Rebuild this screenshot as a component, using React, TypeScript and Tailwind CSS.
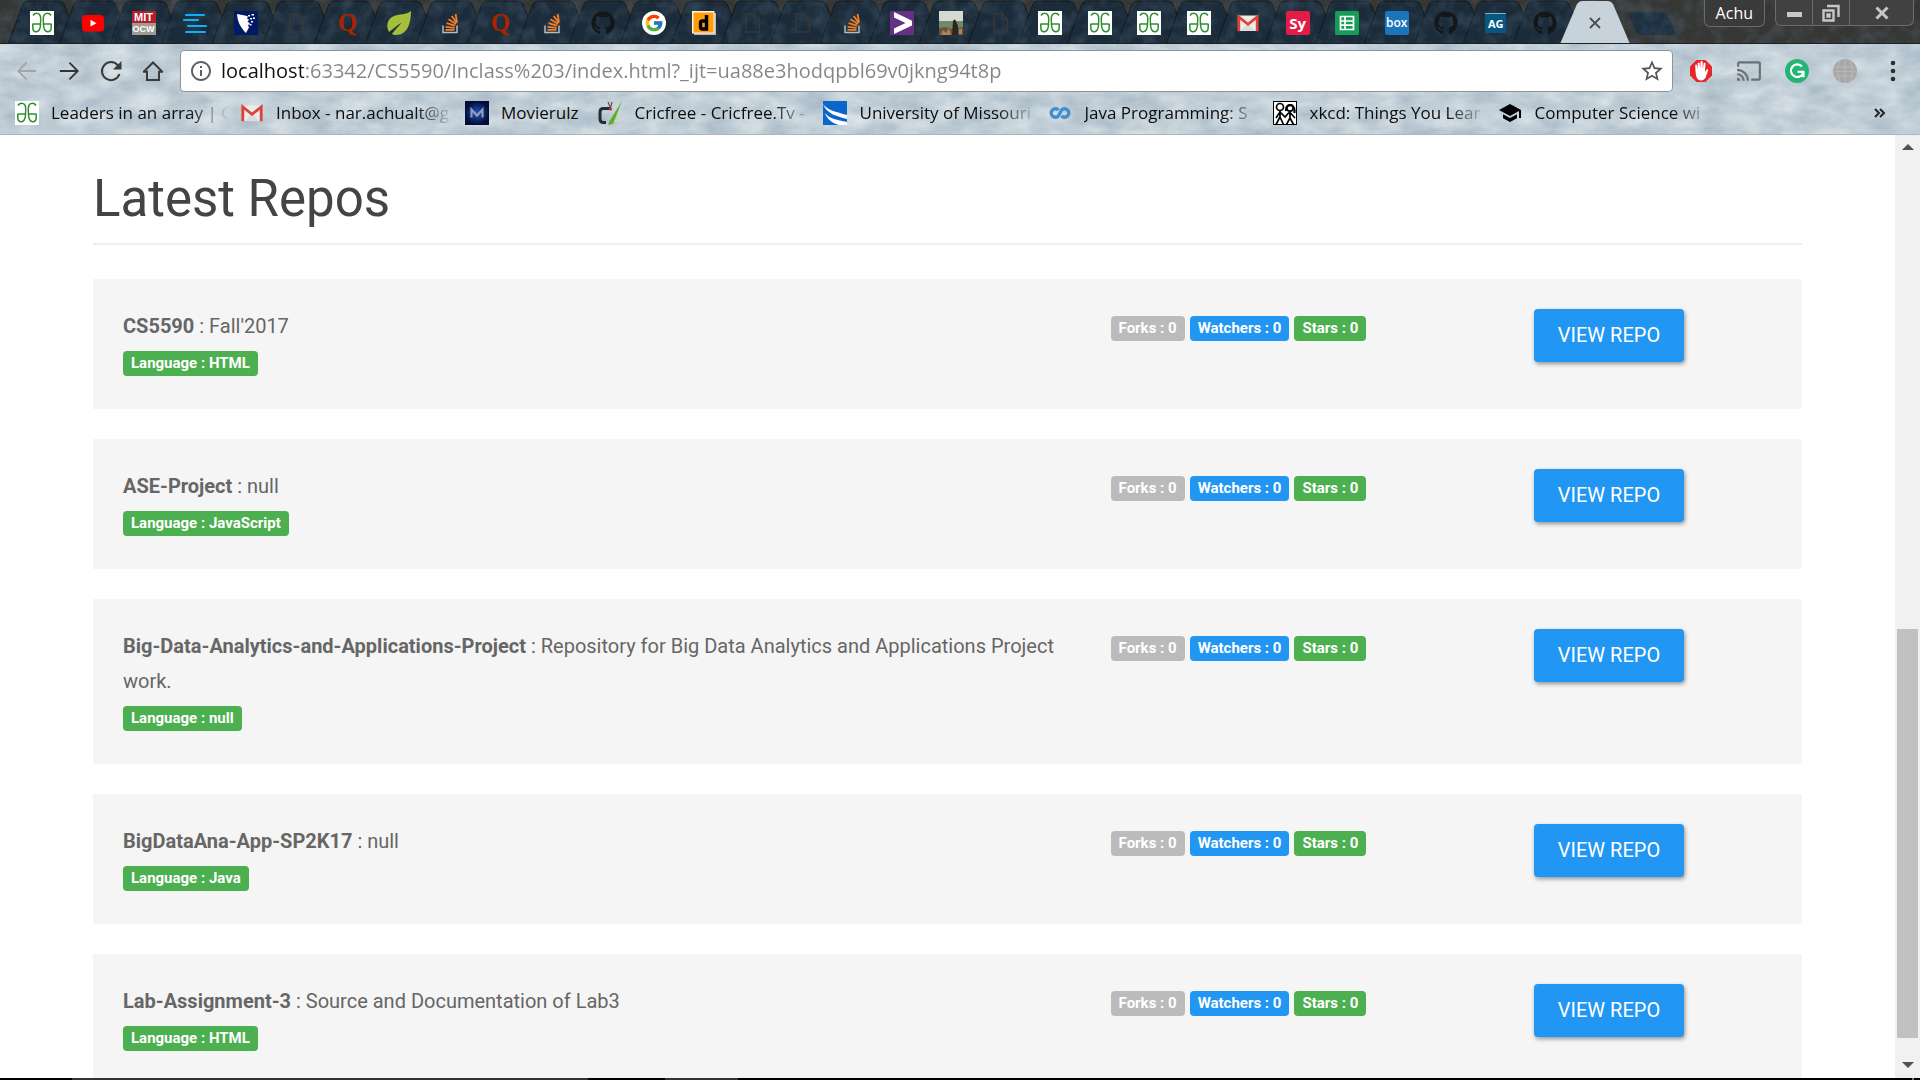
import React from "react";
import { FaGithub } from "react-icons/fa";
import { FcGoogle } from "react-icons/fc";
import { MdCast, MdInfoOutline, MdSchool, MdStarBorder } from "react-icons/md";

type IconProps = { className?: string };

/* ---------- favicons ---------- */

const Geeks = () => (
  <svg viewBox="0 0 24 24" className="size-6">
    <rect width="24" height="24" fill="#fff" />
    <g fill="none" stroke="#2f8d2f" strokeWidth="1.5">
      <path d="M3 4.500C5 1.500 9.500 1.500 10.500 5.500C11 8 10.800 10 10.500 13H2.500" />
      <path d="M10.500 13C10.500 23 2.500 22.500 2.800 16.500V13M21 4.500C19 1.500 14.500 1.500 13.500 5.500C13 8 13.200 10 13.500 13H21.500" />
      <path d="M13.500 13C13.500 23 21.500 22.500 21.200 16.500V13" />
    </g>
  </svg>
);

const YouTube = () => (
  <svg viewBox="0 0 24 24" className="size-6">
    <rect x="1" y="4" width="22" height="16.500" rx="3.500" fill="#f00" />
    <path d="M9.500 8.800v6.800l6-3.400z" fill="#fff" />
  </svg>
);

const MitOcw = () => (
  <span className="flex size-6 flex-col font-['Liberation_Sans'] text-[11px] leading-3 font-bold text-white">
    <span className="h-3 bg-[#b3202c] text-center">MIT</span>
    <span className="flex h-3 justify-center bg-[#a09c92] text-[9px]">OCW</span>
  </span>
);

const Lines = () => (
  <svg viewBox="0 0 24 24" className="size-6" stroke="#0ab1fb" strokeWidth="2.200" strokeLinecap="round">
    <path d="M3 4h18M1 9h14M5 15h18M3 21h19" />
  </svg>
);

const Shield = () => (
  <svg viewBox="0 0 24 24" className="size-6">
    <rect width="24" height="24" fill="#001a66" />
    <path d="M3 3l8 1.500 3 1-1 2 2 1-1.500 2.500 2.500 1-2 2.500 1 2-2 3.500-1 2C8 18 3.500 12 3 3z" fill="#fff" />
    <path d="M14 4h2v1.500h-2zM17.500 3H20v1.500h-2.500zM16 7h2v1.500h-2zM19 6.500h2V8h-2zM17 10h2v1.500h-2zM15.500 13h2v1.500h-2z" fill="#fff" />
  </svg>
);

const BlankPage = () => (
  <svg viewBox="0 0 24 24" className="size-6" fill="none" stroke="#36393c" strokeWidth="1.500">
    <path d="M5 3h8l5.500 5.500V21H5zM13 3v5.500h5.500" />
  </svg>
);

const Quora = () => (
  <span className="flex size-6 items-center justify-center font-['Liberation_Serif'] text-[25px] leading-6 font-bold text-[#a82400]">
    Q
  </span>
);

const Leaf = () => (
  <svg viewBox="0 0 24 24" className="size-6">
    <path d="M24 0C24 13 20 24 9 24c-1.500 0-3-.4-4-1.200C8 19 12 15 14.500 11.500 10 14.500 5 18.500 2 21-1 16 0 8.500 6 5.500 12 2.500 19 4 24 0z" fill="#a4bf39" />
  </svg>
);

const StackOverflow = () => (
  <svg viewBox="0 0 24 24" className="size-6">
    <path d="M5 14.500v7h14v-7" fill="none" stroke="#b4bcc0" strokeWidth="1.500" />
    <g stroke="#f48024" strokeWidth="1.800">
      <path d="M7.500 18.800h9M7.600 15.800l9 1M8.500 12.200l8.600 2.500M10.500 8.300l7.500 4.700M13.700 5l5.200 7M17.600 3l1.400 8.300" />
    </g>
  </svg>
);

const GitHub = () => <FaGithub className="size-6 text-[#14171a]" />;

const Google = () => (
  <span className="flex size-6 items-center justify-center rounded-full bg-white">
    <FcGoogle className="size-5" />
  </span>
);

const LetterD = () => (
  <svg viewBox="0 0 24 24" className="size-6">
    <rect x="2" y="2" width="22" height="22" fill="#b8b8b8" />
    <rect x="0" y="0" width="22.500" height="22.500" fill="#fff3dc" />
    <rect x="1.500" y="1.500" width="20" height="20" fill="#ff9d0a" />
    <path d="M14.500 4v14H10.500a2 2 0 0 1-2-2v-4a2 2 0 0 1 2-2h4" fill="none" stroke="#000" strokeWidth="3.400" />
  </svg>
);

const Accenture = () => (
  <svg viewBox="0 0 24 24" className="size-6">
    <rect width="24" height="24" fill="#663084" />
    <path d="M4 1l18 8.800v4.600L4 23v-5.600l11.500-5.300L4 6.600z" fill="#fff" />
  </svg>
);

const Photo = () => (
  <svg viewBox="0 0 24 24" className="size-6">
    <rect width="24" height="24" fill="#d6d9d2" />
    <rect y="10" width="24" height="14" fill="#6d8a6c" />
    <path d="M0 17l6-1 8 2 10-2v8H0z" fill="#6e5236" />
    <path d="M14 10q1.500-3 3 0l2 5v9h-6z" fill="#2c2522" />
    <path d="M2 24l2-5 3 3 3-5 2 7zM20 18h3v5h-3z" fill="#a98557" />
  </svg>
);

const Gmail = () => (
  <svg viewBox="0 0 24 24" className="size-6">
    <path d="M2 4.500h20v15.500H2z" fill="#ececec" />
    <path d="M5 20l7-8 7 8z" fill="#dcdcdc" />
    <path d="M2.800 20.300V6L12 13.300 21.200 6v14.300" fill="none" stroke="#db4437" strokeWidth="2.800" />
  </svg>
);

const Sy = () => (
  <span className="flex size-6 items-center justify-center rounded-xs bg-[#e31b47] font-['Open_Sans'] text-[15px] leading-6 font-bold text-white">
    Sy
  </span>
);

const Sheets = () => (
  <svg viewBox="0 0 24 24" className="size-6">
    <rect width="24" height="24" rx="1.500" fill="#159d58" />
    <path d="M5.500 5.500h13v13h-13zM5.500 10h13M5.500 14.200h13M10 5.500v13" fill="none" stroke="#fff" strokeWidth="1.700" />
  </svg>
);

const Box = () => (
  <span className="flex size-6 items-center justify-center rounded-xs bg-[#1b75bc] font-['Open_Sans'] text-[12px] leading-6 font-semibold text-white">
    box
  </span>
);

const Ag = () => (
  <span className="flex size-6 items-center justify-center">
    <span className="h-5 w-[21px] border-t border-[#7fb4cf] bg-[#075780] text-center font-['Open_Sans'] text-[11px] leading-5 font-bold text-white">
      AG
    </span>
  </span>
);

const Movie = () => (
  <svg viewBox="0 0 24 24" className="size-6">
    <defs>
      <radialGradient id="movieGlow">
        <stop offset="0" stopColor="#1f55b8" />
        <stop offset="1" stopColor="#040b38" />
      </radialGradient>
    </defs>
    <rect width="24" height="24" fill="url(#movieGlow)" />
    <path d="M6.500 16.500V8.500l5.500 6 5.500-6v8" fill="none" stroke="#8f9cba" strokeWidth="2.200" />
  </svg>
);

const Cricket = () => (
  <svg viewBox="0 0 24 24" className="size-6">
    <path d="M13 7.500H5.500Q2 7.500 2 11v6.500Q2 21.500 5.500 21.500H8" fill="none" stroke="#262b33" strokeWidth="3" />
    <path d="M15 20h3q3 0 3-3v-6" fill="none" stroke="#c4dfb0" strokeWidth="2" />
    <path d="M24 0L15 23l-5 1 1.500-4z" fill="#62ac2f" />
    <path d="M10 1l2.500 6L14 1" fill="none" stroke="#555" strokeWidth="1.200" />
    <circle cx="12.500" cy="8" r="1.600" fill="#d4232b" />
  </svg>
);

const University = () => (
  <svg viewBox="0 0 24 24" className="size-6">
    <rect width="24" height="24" fill="#0a66cc" />
    <path d="M0 3c4 6 13 8 24 11v4C13 15 4 13 0 3zM2 12c5 6 12 7 22 9v3h-8C9 22 4 18 2 12z" fill="#fff" />
  </svg>
);

const Infinity = () => (
  <svg viewBox="0 0 24 24" className="size-6" fill="none" stroke="#3f8fd2" strokeWidth="3.400">
    <path d="M10.500 9.200A4.200 4.200 0 1 0 10.500 14.800L13.500 9.200A4.200 4.200 0 1 1 13.500 14.800" strokeLinejoin="round" />
  </svg>
);

const Xkcd = () => (
  <svg viewBox="0 0 24 24" className="size-6">
    <rect x=".5" y=".5" width="23" height="23" fill="#fff" stroke="#000" />
    <g fill="none" stroke="#000" strokeWidth="1.700">
      <circle cx="7" cy="6" r="3.500" />
      <circle cx="17" cy="7" r="3.200" />
      <path d="M7 9.500V16l-4 7.500M7 16l3.500 7.500M7 11l-4 6M7 11l5 5 4-4.500M17 10.500V17l-3.500 6.500M17 17l3.500 6.500M17 11.500l5 5.500" />
      <path d="M13 10c-1-7 8-8 8.500-1v3" strokeWidth="2.200" />
    </g>
  </svg>
);

const School = () => <MdSchool className="size-6 text-black" />;

/* ---------- toolbar icons ---------- */

const Arrow = ({ className }: IconProps) => (
  <svg viewBox="0 0 24 24" className={className} fill="none" stroke="currentColor" strokeWidth="2.200">
    <path d="M1 12h21M12.500 2l10 10-10 10" />
  </svg>
);

const Reload = () => (
  <svg viewBox="0 0 24 24" className="size-6 text-[#3a3a3a]">
    <path d="M19 6.500A9 9 0 1 0 20.500 15" fill="none" stroke="currentColor" strokeWidth="2" />
    <path d="M22.500 2v8.500h-8.500z" fill="currentColor" />
  </svg>
);

const Home = () => (
  <svg viewBox="0 0 24 24" className="size-6 text-[#3a3a3a]" fill="none" stroke="currentColor" strokeWidth="2">
    <path d="M2.500 13L12 3.500l9.500 9.500M2 12.800h4V21h12v-8.200h4" />
  </svg>
);

const AdBlock = () => (
  <svg viewBox="0 0 24 24" className="size-6">
    <path d="M7.500 1h9L23 7.500v9L16.500 23h-9L1 16.500v-9z" fill="#e8262a" />
    <path d="M6.500 12.500l-.3-6.500q1-1 1.800 0l.6 4.500L8.800 4q1-1 1.900 0l.5 6 .4-7.500q1-.9 2 0l.2 7.500.9-6q1.100-.8 1.800.2L16 13l1.500-2.500q1.500-.5 1.800.6L17 17.500Q15.500 21.500 12 21.500c-3.500 0-5-3-5.500-9z" fill="#fff" />
  </svg>
);

const Grammarly = () => (
  <svg viewBox="0 0 24 24" className="size-6">
    <circle cx="12" cy="12" r="12" fill="#22b573" />
    <path d="M17 7.500A6.300 6.300 0 1 0 18.300 13.500M12.500 12.800h6v5.500" fill="none" stroke="#fff" strokeWidth="2.200" />
  </svg>
);

const Globe = () => (
  <svg viewBox="0 0 24 24" className="size-6">
    <circle cx="12" cy="12" r="12" fill="#a9a7a6" />
    <path d="M1 8h22M1 12.500h22M2.500 17h19M12 0v24M7 1.500q-5 10 0 21M17 1.500q5 10 0 21" fill="none" stroke="#b8b7b6" strokeWidth="1.200" />
  </svg>
);

const Dots = () => (
  <svg viewBox="0 0 24 24" className="size-6 text-[#2f2f2f]" fill="currentColor">
    <circle cx="12" cy="4" r="2.300" />
    <circle cx="12" cy="12" r="2.300" />
    <circle cx="12" cy="20" r="2.300" />
  </svg>
);

/* ---------- theme textures ---------- */

const StoneTexture = () => (
  <svg aria-hidden="true" className="absolute inset-0 h-full w-full">
    <filter id="stone" x="0" y="0" width="100%" height="100%" colorInterpolationFilters="sRGB">
      <feTurbulence type="fractalNoise" baseFrequency="0.03 0.06" numOctaves="5" seed="4" />
      <feColorMatrix values="0.26 0 0 0 0.63  0.22 0 0 0 0.7  0.18 0 0 0 0.755  0 0 0 0 1" />
    </filter>
    <rect width="100%" height="100%" filter="url(#stone)" />
  </svg>
);

const StripTexture = () => (
  <svg aria-hidden="true" className="pointer-events-none absolute inset-0 z-10 h-full w-full">
    <filter id="grain" x="0" y="0" width="100%" height="100%" colorInterpolationFilters="sRGB">
      <feTurbulence type="fractalNoise" baseFrequency="0.07 0.07" numOctaves="4" seed="9" />
      <feColorMatrix values="0 0 0 0 0.4  0 0 0 0 0.5  0 0 0 0 0.6  0.6 0 0 0 -0.24" />
    </filter>
    <rect width="100%" height="100%" filter="url(#grain)" />
  </svg>
);

/* ---------- tab strip ---------- */

type Entry = { name: string; Icon: () => React.ReactElement };

const wideTabs: Entry[] = [
  { name: "GeeksforGeeks", Icon: Geeks },
  { name: "YouTube", Icon: YouTube },
  { name: "MIT OpenCourseWare", Icon: MitOcw },
  { name: "Outline", Icon: Lines },
  { name: "Shield", Icon: Shield },
  { name: "Untitled", Icon: BlankPage },
  { name: "Quora", Icon: Quora },
  { name: "Spring", Icon: Leaf },
  { name: "Stack Overflow", Icon: StackOverflow },
  { name: "Quora", Icon: Quora },
  { name: "Stack Overflow", Icon: StackOverflow },
  { name: "GitHub", Icon: GitHub },
  { name: "Google", Icon: Google },
];

const narrowTabs: Entry[] = [
  { name: "D", Icon: LetterD },
  { name: "Untitled", Icon: BlankPage },
  { name: "Untitled", Icon: BlankPage },
  { name: "Stack Overflow", Icon: StackOverflow },
  { name: "Accenture", Icon: Accenture },
  { name: "Photo", Icon: Photo },
  { name: "Untitled", Icon: BlankPage },
  { name: "GeeksforGeeks", Icon: Geeks },
  { name: "GeeksforGeeks", Icon: Geeks },
  { name: "GeeksforGeeks", Icon: Geeks },
  { name: "GeeksforGeeks", Icon: Geeks },
  { name: "Gmail", Icon: Gmail },
  { name: "Symbolab", Icon: Sy },
  { name: "Sheets", Icon: Sheets },
  { name: "Box", Icon: Box },
  { name: "GitHub", Icon: GitHub },
  { name: "AG", Icon: Ag },
  { name: "GitHub", Icon: GitHub },
];

const Tab = ({ name, Icon }: Entry) => (
  <button type="button" aria-label={name} className="relative flex h-11 items-center justify-center pt-0.5">
    <svg viewBox="0 0 72 44" preserveAspectRatio="none" aria-hidden="true" className="absolute top-0 -left-2 z-0 h-11 w-[72px]">
      <path d="M0 44L15 4Q17 1 20 1H51Q54 1 56 4L72 44" fill="#1b2b39" stroke="#10191f" strokeWidth="1" />
    </svg>
    <span className="relative z-20">
      <Icon />
    </span>
  </button>
);

const TabStrip = () => (
  <div className="relative z-0 flex h-11 items-start overflow-hidden border-b border-[#1b2126] bg-[#363735] pr-1.5 pl-4">
    <StripTexture />
    <div className="grid w-[663px] grid-cols-13">
      {wideTabs.map((t, i) => (
        <Tab key={i} {...t} />
      ))}
    </div>
    <div className="grid w-[891px] grid-cols-18">
      {narrowTabs.map((t, i) => (
        <Tab key={i} {...t} />
      ))}
    </div>
    <button type="button" aria-label="Close tab" className="relative flex h-11 w-[50px] items-center justify-center pt-0.5">
      <svg viewBox="0 0 70 44" aria-hidden="true" className="absolute top-0 -left-2.5 z-10 h-11 w-[70px]">
        <path d="M0 44L17 4Q19 1 22 1H48Q51 1 53 4L70 44" fill="#c8d2da" />
      </svg>
      <svg viewBox="0 0 12 12" className="relative z-20 size-3" stroke="#4d4d4d" strokeWidth="1.800">
        <path d="M1 1l10 10M11 1L1 11" />
      </svg>
    </button>
    <button type="button" aria-label="New tab" className="ml-2">
      <svg viewBox="0 0 48 24" className="mt-3 h-6 w-12">
        <path d="M0 2Q0 0 2 0H36Q39 0 40 3L47 20Q48 23 45 23H12Q9 23 8 20z" fill="#1d3040" />
      </svg>
    </button>
    <div className="relative z-20 ml-auto flex items-start">
      <button type="button" className="h-[27px] rounded-b-md border border-t-0 border-[#6b6b6b] bg-[#3a3a3a] px-[11px] font-['Open_Sans'] text-[16px] leading-[27px] text-white">
        Achu
      </button>
      <div className="ml-[10px] flex h-[26px] rounded-b-md border border-t-0 border-[#6b6b6b] bg-[#414141]">
        <button type="button" aria-label="Minimize" className="flex w-[37px] items-center justify-center border-r border-[#6b6b6b]">
          <span className="mt-1 h-[5px] w-[15px] bg-[#c8c8c8]" />
        </button>
        <button type="button" aria-label="Restore" className="flex w-[37px] items-center justify-center border-r border-[#6b6b6b]">
          <svg viewBox="0 0 18 18" className="size-[18px]" fill="none" stroke="#c8c8c8" strokeWidth="2.400">
            <path d="M1.500 6.500h10v10h-10zM5.500 10.500h2v2h-2zM5 2h11.500v11" />
          </svg>
        </button>
        <button type="button" aria-label="Close" className="flex w-[63px] items-center justify-center">
          <svg viewBox="0 0 14 14" className="size-3.5" stroke="#c8c8c8" strokeWidth="3">
            <path d="M1.500 1.500l11 11M12.500 1.500l-11 11" />
          </svg>
        </button>
      </div>
    </div>
  </div>
);

/* ---------- toolbar and bookmarks ---------- */

const NavButton = ({ label, children }: { label: string; children: React.ReactNode }) => (
  <button type="button" aria-label={label} className="flex h-10 w-[42px] items-center justify-center">
    {children}
  </button>
);

const ExtButton = ({ label, children }: { label: string; children: React.ReactNode }) => (
  <button type="button" aria-label={label} className="flex h-10 w-12 items-center justify-center">
    {children}
  </button>
);

const Toolbar = () => (
  <div className="flex items-center pt-1.5 pr-[3px] pl-1.5">
    <NavButton label="Back">
      <Arrow className="size-5 rotate-180 text-[#a0a5a9]" />
    </NavButton>
    <NavButton label="Forward">
      <Arrow className="size-5 text-[#333]" />
    </NavButton>
    <NavButton label="Reload">
      <Reload />
    </NavButton>
    <NavButton label="Home">
      <Home />
    </NavButton>
    <div className="mr-1 ml-1.5 flex h-[42px] flex-1 items-center rounded-sm border border-[#8b959d] bg-white pr-[7px] pl-2">
      <MdInfoOutline className="size-6 text-[#5f6062]" />
      <input
        type="text"
        aria-label="Address"
        defaultValue="localhost:63342/CS5590/Inclass%203/index.html?_ijt=ua88e3hodqpbl69v0jkng94t8p"
        className="ml-2 min-w-0 flex-1 bg-[linear-gradient(to_right,#111_83px,#858585_83px)] bg-clip-text font-['Open_Sans'] text-[20px] leading-8 text-transparent outline-none"
      />
      <button type="button" aria-label="Bookmark this page">
        <MdStarBorder className="size-[26px] text-[#555]" />
      </button>
    </div>
    <ExtButton label="AdBlock">
      <AdBlock />
    </ExtButton>
    <ExtButton label="Cast">
      <MdCast className="size-[26px] text-[#6c7074]" />
    </ExtButton>
    <ExtButton label="Grammarly">
      <Grammarly />
    </ExtButton>
    <ExtButton label="Web extension">
      <Globe />
    </ExtButton>
    <ExtButton label="Menu">
      <Dots />
    </ExtButton>
  </div>
);

type Bookmark = Entry & { short?: boolean };

const bookmarks: Bookmark[] = [
  { name: "Leaders in an array | G", Icon: Geeks },
  { name: "Inbox - nar.achualt@g", Icon: Gmail },
  { name: "Movierulz", Icon: Movie, short: true },
  { name: "Cricfree - Cricfree.Tv -", Icon: Cricket },
  { name: "University of Missouri", Icon: University },
  { name: "Java Programming: S", Icon: Infinity },
  { name: "xkcd: Things You Lear", Icon: Xkcd },
  { name: "Computer Science wi", Icon: School },
];

const Bookmarks = () => (
  <nav aria-label="Bookmarks" className="flex h-[42px] items-center gap-5 pr-[34px] pl-[15px]">
    {bookmarks.map(({ name, Icon, short }) => (
      <a key={name} href="#" className={short ? "flex items-center gap-3" : "flex w-[205px] items-center gap-3"}>
        <span className="shrink-0">
          <Icon />
        </span>
        <span
          className={
            short
              ? "font-['Open_Sans'] text-[17px] leading-6 whitespace-nowrap text-[#0c0c0c]"
              : "font-['Open_Sans'] text-[17px] leading-6 whitespace-nowrap text-[#0c0c0c] [mask-image:linear-gradient(to_right,#000_138px,transparent_178px)]"
          }
        >
          {name}
        </span>
      </a>
    ))}
    <button type="button" aria-label="More bookmarks" className="ml-auto">
      <svg viewBox="0 0 12 10" className="h-2.5 w-3" fill="none" stroke="#222" strokeWidth="2">
        <path d="M1 1l4 4-4 4M6 1l4 4-4 4" />
      </svg>
    </button>
  </nav>
);

/* ---------- page ---------- */

type Repo = { name: string; description: string; language: string };

const repos: Repo[] = [
  { name: "CS5590", description: "Fall'2017", language: "HTML" },
  { name: "ASE-Project", description: "null", language: "JavaScript" },
  {
    name: "Big-Data-Analytics-and-Applications-Project",
    description: "Repository for Big Data Analytics and Applications Project work.",
    language: "null",
  },
  { name: "BigDataAna-App-SP2K17", description: "null", language: "Java" },
  { name: "Lab-Assignment-3", description: "Source and Documentation of Lab3", language: "HTML" },
];

const Badge = ({ color, children }: { color: string; children: React.ReactNode }) => (
  <span className={"h-[25px] rounded-sm px-2 text-[15px] leading-6 font-bold whitespace-nowrap text-white " + color}>{children}</span>
);

const RepoCard = ({ name, description, language }: Repo) => (
  <article className="mb-[30px] bg-[#f5f5f5] p-[30px]">
    <div className="-mx-[22px] grid grid-cols-12">
      <div className="col-span-7 px-[22px]">
        <p>
          <strong className="font-bold">{name}</strong> : {description}
        </p>
        <div className="flex h-[35px] items-center pt-1">
          <Badge color="bg-[#4caf50]">Language : {language}</Badge>
        </div>
      </div>
      <div className="col-span-3 flex h-[35px] items-center gap-[5px] px-[22px] pt-1">
        <Badge color="bg-[#bbbbbb]">Forks : 0</Badge>
        <Badge color="bg-[#2196f3]">Watchers : 0</Badge>
        <Badge color="bg-[#4caf50]">Stars : 0</Badge>
      </div>
      <div className="col-span-2 h-[53px] px-[22px]">
        <a
          href="#"
          className="inline-block h-[53px] rounded-[4px] bg-[#2196f3] px-6 text-[20px] leading-[53px] whitespace-nowrap text-white shadow-[1px_2px_4px_rgba(0,0,0,0.4)]"
        >
          VIEW REPO
        </a>
      </div>
    </div>
  </article>
);

const ScrollBar = () => (
  <div aria-hidden="true" className="flex w-[25px] shrink-0 flex-col items-center bg-[#f1f1f1]">
    <svg viewBox="0 0 12 6" className="mt-[9px] h-1.5 w-3">
      <path d="M0 6L6 0l6 6z" fill="#505050" />
    </svg>
    <div className="flex w-full flex-1 flex-col items-center py-[10px]">
      <div className="grow-[1180]" />
      <div className="w-[21px] grow-[1030] bg-[#c1c1c1]" />
      <div className="grow-[36]" />
    </div>
    <svg viewBox="0 0 12 6" className="mb-[10px] h-1.5 w-3">
      <path d="M0 0l6 6 6-6z" fill="#505050" />
    </svg>
  </div>
);

export default function App() {
  return (
    <div className="flex h-screen flex-col overflow-hidden bg-white">
      <header className="shrink-0">
        <TabStrip />
        <div className="relative z-0 border-b border-[#b0b4b8] bg-[#c3ced7]">
          <StoneTexture />
          <div className="relative">
            <Toolbar />
            <Bookmarks />
          </div>
        </div>
      </header>
      <div className="flex min-h-0 flex-1">
        <main className="min-w-0 flex-1 overflow-hidden px-[93px] font-['Roboto'] text-[20px] leading-[35px] text-[#666]">
          <h1 className="mt-9 border-b-2 border-[#eee] pb-4 text-[51px] leading-[56px] text-[#444]">Latest Repos</h1>
          <section className="pt-[34px]">
            {repos.map((r) => (
              <RepoCard key={r.name} {...r} />
            ))}
          </section>
        </main>
        <ScrollBar />
      </div>
      <footer aria-hidden="true" className="flex h-0.5 shrink-0 bg-black">
        <span className="ml-[72px] w-[516px] bg-[#333]" />
        <span className="ml-[77px] w-[73px] bg-[#333]" />
        <span className="mr-1.5 ml-auto w-0.5 bg-[#777]" />
      </footer>
    </div>
  );
}
